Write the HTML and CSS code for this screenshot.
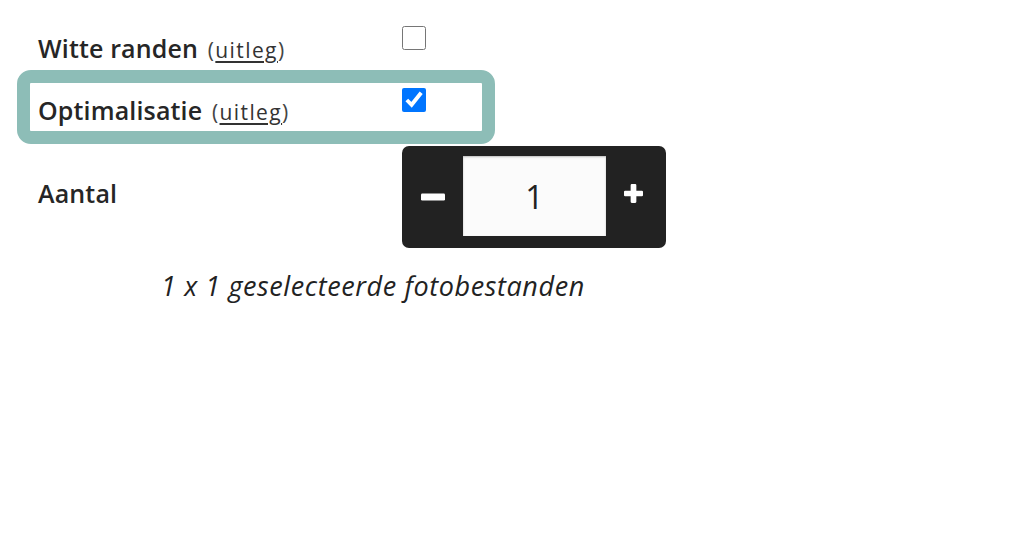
FILE: index.html
```html
<!DOCTYPE html>
<html lang="nl">
<head>
<meta charset="utf-8">
<link rel="stylesheet" href="styles.css">
</head>
<body>
<div class="page">
  <div class="form">
    <div class="row">
      <div class="label">Witte randen <span class="hint">(<a href="#">uitleg</a>)</span></div>
      <div class="control"><input type="checkbox" class="check"></div>
    </div>
    <div class="row row-highlight">
      <div class="label">Optimalisatie <span class="hint">(<a href="#">uitleg</a>)</span></div>
      <div class="control"><input type="checkbox" class="check" checked></div>
    </div>
    <div class="row row-amount">
      <div class="label">Aantal</div>
      <div class="control">
        <div class="stepper">
          <button class="step-btn" type="button" aria-label="Minder">
            <svg width="24" height="8" viewBox="0 0 24 8"><rect x="0" y="0.5" width="24" height="7" rx="1.2" fill="#fff"/></svg>
          </button>
          <input class="step-input" type="text" value="1">
          <button class="step-btn step-plus" type="button" aria-label="Meer">
            <svg width="19" height="19" viewBox="0 0 20 20"><path d="M7 1.2a1.2 1.2 0 0 1 1.2-1.2h3.6A1.2 1.2 0 0 1 13 1.2V7h5.8A1.2 1.2 0 0 1 20 8.2v3.6a1.2 1.2 0 0 1-1.2 1.2H13v5.8a1.2 1.2 0 0 1-1.2 1.2H8.2A1.2 1.2 0 0 1 7 18.8V13H1.2A1.2 1.2 0 0 1 0 11.8V8.2A1.2 1.2 0 0 1 1.2 7H7z" fill="#fff"/></svg>
          </button>
        </div>
      </div>
    </div>
    <p class="summary">1 x 1 geselecteerde fotobestanden</p>
  </div>
</div>
</body>
</html>
```

FILE: styles.css
```css
html, body {
  margin: 0;
  padding: 0;
  background: #fff;
}

body {
  font-family: "Open Sans", "Liberation Sans", sans-serif;
  color: #222;
}

.page {
  padding: 21px 0 0 30px;
}

.form {
  width: 686px;
}

.row {
  display: grid;
  grid-template-columns: 364px auto;
  width: 452px;
  height: 48px;
  padding-left: 8px;
  box-sizing: border-box;
  margin-bottom: 14px;
}

.row-highlight {
  outline: 13px solid #8dbdb7;
  border-radius: 1px;
}

.label {
  font-size: 25px;
  font-weight: 600;
  letter-spacing: 0.15px;
  line-height: 32px;
  padding-top: 11px;
  white-space: nowrap;
  color: #262626;
}

.hint {
  font-size: 21px;
  font-weight: 400;
  letter-spacing: 1.4px;
  margin-left: 3px;
  color: #444;
}

.hint a {
  color: #333;
  text-decoration: underline;
  text-underline-offset: 3px;
}

.control {
  padding-top: 5px;
}

.check {
  width: 24px;
  height: 24px;
  margin: 0;
  display: block;
  accent-color: #0075ff;
}

.row-amount {
  height: auto;
  align-items: center;
  margin-bottom: 0;
}

.row-amount .label {
  padding-top: 0;
  margin-top: -8px;
}

.row-amount .control {
  padding-top: 1px;
}

.stepper {
  display: flex;
  align-items: stretch;
  width: 264px;
  height: 102px;
  box-sizing: border-box;
  padding: 10px 0 12px;
  background: #222;
  border-radius: 7px;
}

.step-btn {
  width: 61px;
  border: 0;
  padding: 0;
  background: transparent;
  display: flex;
  align-items: center;
  justify-content: center;
}

.step-plus {
  width: 60px;
  padding-bottom: 6px;
  padding-right: 5px;
}

.step-btn:first-child {
  padding-top: 1px;
}

.step-input {
  width: 143px;
  box-sizing: border-box;
  border: 0;
  margin: 0;
  background: #fbfbfb;
  box-shadow: inset 0 1px 2px rgba(0, 0, 0, 0.25);
  font-family: "Open Sans", "Liberation Sans", sans-serif;
  font-size: 32px;
  color: #222;
  text-align: center;
  padding: 0;
}

.summary {
  margin: 19px 0 0;
  text-align: center;
  font-style: italic;
  font-size: 27px;
  letter-spacing: 0.6px;
  color: #222;
  width: 686px;
}
```
